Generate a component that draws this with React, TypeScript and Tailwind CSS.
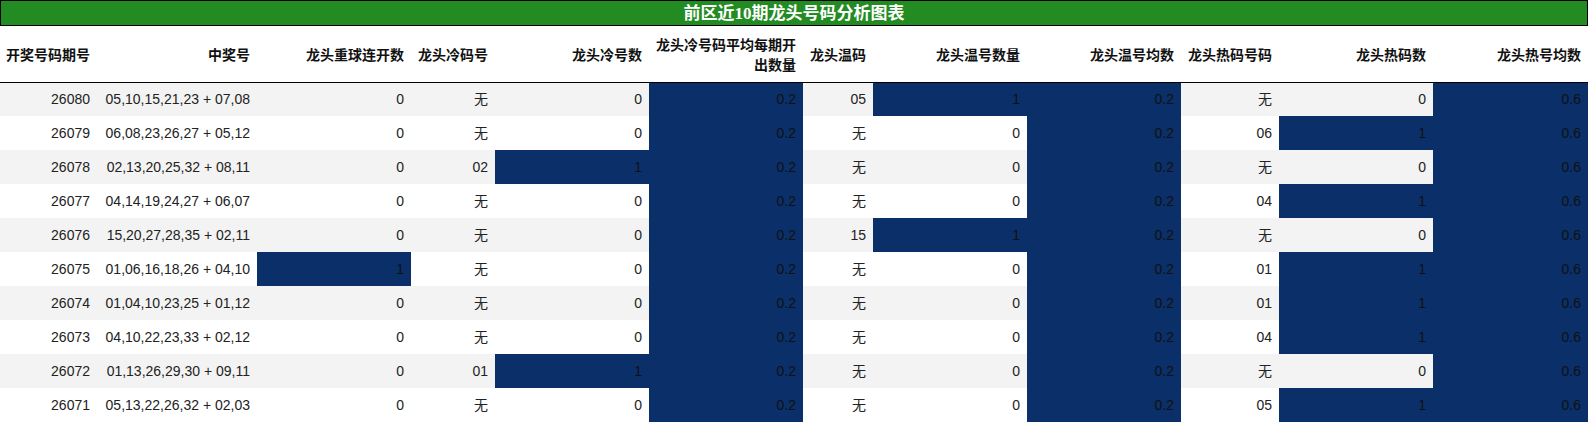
import React from 'react'

type Row = [string, string, number, string, number, number, string, number, number, string, number, number]

const rows: Row[] = [
  ['26080', '05,10,15,21,23 + 07,08', 0, '无', 0, 0.2, '05', 1, 0.2, '无', 0, 0.6],
  ['26079', '06,08,23,26,27 + 05,12', 0, '无', 0, 0.2, '无', 0, 0.2, '06', 1, 0.6],
  ['26078', '02,13,20,25,32 + 08,11', 0, '02', 1, 0.2, '无', 0, 0.2, '无', 0, 0.6],
  ['26077', '04,14,19,24,27 + 06,07', 0, '无', 0, 0.2, '无', 0, 0.2, '04', 1, 0.6],
  ['26076', '15,20,27,28,35 + 02,11', 0, '无', 0, 0.2, '15', 1, 0.2, '无', 0, 0.6],
  ['26075', '01,06,16,18,26 + 04,10', 1, '无', 0, 0.2, '无', 0, 0.2, '01', 1, 0.6],
  ['26074', '01,04,10,23,25 + 01,12', 0, '无', 0, 0.2, '无', 0, 0.2, '01', 1, 0.6],
  ['26073', '04,10,22,23,33 + 02,12', 0, '无', 0, 0.2, '无', 0, 0.2, '04', 1, 0.6],
  ['26072', '01,13,26,29,30 + 09,11', 0, '01', 1, 0.2, '无', 0, 0.2, '无', 0, 0.6],
  ['26071', '05,13,22,26,32 + 02,03', 0, '无', 0, 0.2, '无', 0, 0.2, '05', 1, 0.6],
]

const headers = [
  '开奖号码期号',
  '中奖号',
  '龙头重球连开数',
  '龙头冷码号',
  '龙头冷号数',
  '龙头冷号码平均每期开出数量',
  '龙头温码',
  '龙头温号数量',
  '龙头温号均数',
  '龙头热码号码',
  '龙头热码数',
  '龙头热号均数',
]

const widths = [
  'w-[97px]', 'w-[160px]', 'w-[154px]', 'w-[84px]', 'w-[154px]', 'w-[154px]',
  'w-[70px]', 'w-[154px]', 'w-[154px]', 'w-[98px]', 'w-[154px]', 'w-[155px]',
]

export default function App() {
  return (
    <div className="w-[1588px] bg-white font-['Liberation_Sans','Noto_Sans_CJK_SC',sans-serif]">
      {/* 标题 */}
      <div className="h-[26px] border border-black bg-[#228b22] flex items-center justify-center">
        <span className="text-[17px] font-bold text-white leading-none font-['Liberation_Serif','Noto_Sans_CJK_SC',serif]">
          前区近10期龙头号码分析图表
        </span>
      </div>

      <table className="table-fixed border-collapse w-[1588px]">
        <colgroup>
          {widths.map((w, i) => (
            <col key={i} className={w} />
          ))}
        </colgroup>
        <thead>
          <tr className="h-[56px] border-b border-black">
            {headers.map((h) => (
              <th
                key={h}
                className="pr-[7px] pl-[6px] text-right align-middle text-[14px] leading-[20px] font-bold text-[#111] font-['Noto_Sans_CJK_SC',sans-serif]"
              >
                {h}
              </th>
            ))}
          </tr>
        </thead>
        <tbody>
          {rows.map((r, ri) => (
            <tr key={r[0]} className={ri % 2 === 0 ? 'h-[34px] bg-[#f3f3f3]' : 'h-[34px] bg-white'}>
              {r.map((v, ci) => {
                // 数值 > 0 时深蓝高亮
                const hot = typeof v === 'number' && v > 0
                return (
                  <td
                    key={ci}
                    className={
                      hot
                        ? 'pr-[7px] text-right text-[14px] leading-none text-[#111] bg-[#0a2f69]'
                        : 'pr-[7px] text-right text-[14px] leading-none text-[#222]'
                    }
                  >
                    {v}
                  </td>
                )
              })}
            </tr>
          ))}
        </tbody>
      </table>
    </div>
  )
}
